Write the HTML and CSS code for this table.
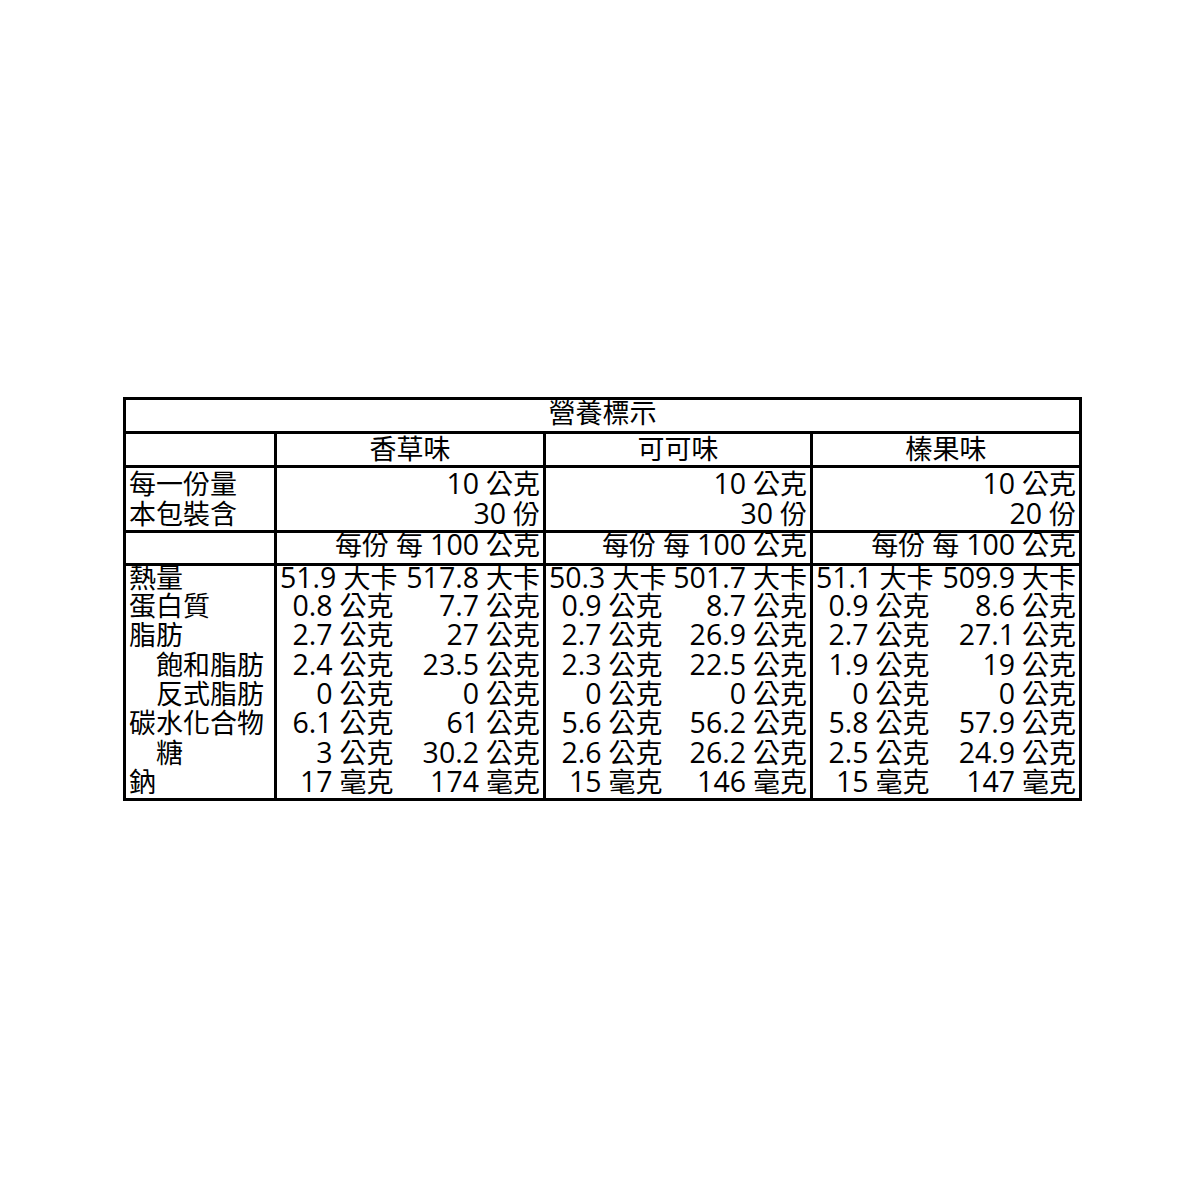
FILE: index.html
```html
<!DOCTYPE html>
<html lang="zh-Hant">
<head>
<meta charset="utf-8">
<title>營養標示</title>
<link rel="stylesheet" href="styles.css">
</head>
<body>
<table class="nutrition">
  <colgroup>
    <col class="c-label">
    <col class="c-ps"><col class="c-ph1">
    <col class="c-ps"><col class="c-ph2">
    <col class="c-ps"><col class="c-ph3">
  </colgroup>
  <tr class="r-title"><td colspan="7" class="title">營養標示</td></tr>
  <tr class="r-flavor">
    <td class="label"></td>
    <td colspan="2" class="center">香草味</td>
    <td colspan="2" class="center">可可味</td>
    <td colspan="2" class="center">榛果味</td>
  </tr>
  <tr class="r-serving">
    <td class="label">每一份量<br>本包裝含</td>
    <td colspan="2" class="num"><span class="n">10</span> 公克<br><span class="n">30</span> 份</td>
    <td colspan="2" class="num"><span class="n">10</span> 公克<br><span class="n">30</span> 份</td>
    <td colspan="2" class="num"><span class="n">10</span> 公克<br><span class="n">20</span> 份</td>
  </tr>
  <tr class="r-unit">
    <td class="label"></td>
    <td colspan="2" class="num">每份 每 <span class="n">100</span> 公克</td>
    <td colspan="2" class="num">每份 每 <span class="n">100</span> 公克</td>
    <td colspan="2" class="num">每份 每 <span class="n">100</span> 公克</td>
  </tr>
  <tr class="data first">
    <td class="label">熱量</td>
    <td class="ps"><span class="n">51.9</span> 大卡</td><td class="ph"><span class="n">517.8</span> 大卡</td>
    <td class="ps"><span class="n">50.3</span> 大卡</td><td class="ph"><span class="n">501.7</span> 大卡</td>
    <td class="ps"><span class="n">51.1</span> 大卡</td><td class="ph"><span class="n">509.9</span> 大卡</td>
  </tr>
  <tr class="data">
    <td class="label">蛋白質</td>
    <td class="ps"><span class="n">0.8</span> 公克</td><td class="ph"><span class="n">7.7</span> 公克</td>
    <td class="ps"><span class="n">0.9</span> 公克</td><td class="ph"><span class="n">8.7</span> 公克</td>
    <td class="ps"><span class="n">0.9</span> 公克</td><td class="ph"><span class="n">8.6</span> 公克</td>
  </tr>
  <tr class="data">
    <td class="label">脂肪</td>
    <td class="ps"><span class="n">2.7</span> 公克</td><td class="ph"><span class="n">27</span> 公克</td>
    <td class="ps"><span class="n">2.7</span> 公克</td><td class="ph"><span class="n">26.9</span> 公克</td>
    <td class="ps"><span class="n">2.7</span> 公克</td><td class="ph"><span class="n">27.1</span> 公克</td>
  </tr>
  <tr class="data">
    <td class="label">　飽和脂肪</td>
    <td class="ps"><span class="n">2.4</span> 公克</td><td class="ph"><span class="n">23.5</span> 公克</td>
    <td class="ps"><span class="n">2.3</span> 公克</td><td class="ph"><span class="n">22.5</span> 公克</td>
    <td class="ps"><span class="n">1.9</span> 公克</td><td class="ph"><span class="n">19</span> 公克</td>
  </tr>
  <tr class="data">
    <td class="label">　反式脂肪</td>
    <td class="ps"><span class="n">0</span> 公克</td><td class="ph"><span class="n">0</span> 公克</td>
    <td class="ps"><span class="n">0</span> 公克</td><td class="ph"><span class="n">0</span> 公克</td>
    <td class="ps"><span class="n">0</span> 公克</td><td class="ph"><span class="n">0</span> 公克</td>
  </tr>
  <tr class="data">
    <td class="label">碳水化合物</td>
    <td class="ps"><span class="n">6.1</span> 公克</td><td class="ph"><span class="n">61</span> 公克</td>
    <td class="ps"><span class="n">5.6</span> 公克</td><td class="ph"><span class="n">56.2</span> 公克</td>
    <td class="ps"><span class="n">5.8</span> 公克</td><td class="ph"><span class="n">57.9</span> 公克</td>
  </tr>
  <tr class="data">
    <td class="label">　糖</td>
    <td class="ps"><span class="n">3</span> 公克</td><td class="ph"><span class="n">30.2</span> 公克</td>
    <td class="ps"><span class="n">2.6</span> 公克</td><td class="ph"><span class="n">26.2</span> 公克</td>
    <td class="ps"><span class="n">2.5</span> 公克</td><td class="ph"><span class="n">24.9</span> 公克</td>
  </tr>
  <tr class="data last">
    <td class="label">鈉</td>
    <td class="ps"><span class="n">17</span> 毫克</td><td class="ph"><span class="n">174</span> 毫克</td>
    <td class="ps"><span class="n">15</span> 毫克</td><td class="ph"><span class="n">146</span> 毫克</td>
    <td class="ps"><span class="n">15</span> 毫克</td><td class="ph"><span class="n">147</span> 毫克</td>
  </tr>
</table>
</body>
</html>
```

FILE: styles.css
```css
html, body {
  margin: 0;
  padding: 0;
  background: #ffffff;
}

body {
  padding-top: 397px;
  padding-left: 123px;
  font-family: "Open Sans", "Noto Sans CJK TC", sans-serif;
  color: #000;
}

.nutrition {
  border-collapse: collapse;
  table-layout: fixed;
  width: 959px;
  border: 3px solid #000;
  font-size: 27px;
  font-weight: 400;
  line-height: 24px;
}

.c-label { width: 151px; }
.c-ps { width: 121px; }
.c-ph1 { width: 148px; }
.c-ph2 { width: 146px; }
.c-ph3 { width: 148px; }

.nutrition td {
  padding: 0 3px;
  vertical-align: top;
  white-space: nowrap;
  border-right: 3px solid #000;
}

.nutrition td.ps {
  border-right: none;
  padding-right: 3px;
}

/* numerals in the label are a touch larger than the ideographs */
.n {
  font-size: 28.5px;
  line-height: 0;
}

.r-title td,
.r-flavor td,
.r-serving td,
.r-unit td {
  border-bottom: 3px solid #000;
}

.r-title { height: 34px; }
.r-flavor { height: 34px; }
.r-serving { height: 65px; }
.r-unit { height: 33px; }
.data { height: 29.4px; }

.title,
.center {
  text-align: center;
}

.num,
.ps,
.ph {
  text-align: right;
}

.label {
  text-align: left;
}

.r-title td { padding-top: 1px; }
.r-flavor td { padding-top: 3px; }
.r-serving td { padding-top: 1px; line-height: 30px; }
.r-unit td { padding-top: 0; }
.data td { padding-top: 0; }
```
